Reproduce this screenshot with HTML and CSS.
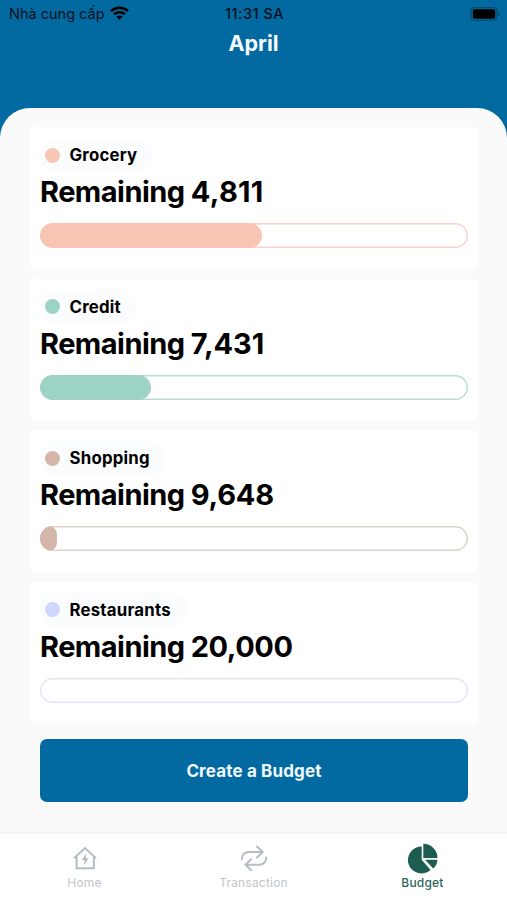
FILE: index.html
```html
<!DOCTYPE html>
<html lang="vi">
<head>
<meta charset="utf-8">
<title>Budget</title>
<link rel="stylesheet" href="styles.css">
</head>
<body>
<div class="app">
  <header class="header">
    <div class="status">
      <div class="carrier">
        <span class="carrier-name">Nhà cung cấp</span>
        <svg class="wifi" width="19" height="14" viewBox="0 0 19 14" fill="none" stroke="#000" stroke-width="2.500">
          <path d="M1 5.200C5.800.700 13.200.700 18 5.200"/>
          <path d="M4 8.400c3.100-2.800 7.900-2.800 11 0"/>
          <path d="M6.500 10.700c1.700-1.500 4.300-1.500 6 0L9.500 13.800z" fill="#000" stroke="none"/>
        </svg>
      </div>
      <span class="clock">11:31 SA</span>
      <svg class="battery" width="30" height="14" viewBox="0 0 30 14">
        <rect x="1.200" y=".7" width="25.600" height="12.600" rx="3.500" fill="none" stroke="#000" stroke-opacity=".3" stroke-width="1.200"/>
        <rect x="2.800" y="2.300" width="22.400" height="9.400" rx="2" fill="#000"/>
        <path d="M28 5v4c1.800-.6 1.800-3.400 0-4z" fill="#000" fill-opacity=".4"/>
      </svg>
    </div>
    <h1 class="month">April</h1>
  </header>

  <main class="sheet">
    <section class="card grocery">
      <div class="tag"><i class="dot"></i><span>Grocery</span></div>
      <h2 class="remaining">Remaining <span class="amount">4,811</span></h2>
      <div class="bar"><div class="fill" style="width:222px"></div></div>
    </section>
    <section class="card credit">
      <div class="tag"><i class="dot"></i><span>Credit</span></div>
      <h2 class="remaining">Remaining <span class="amount">7,431</span></h2>
      <div class="bar"><div class="fill" style="width:111px"></div></div>
    </section>
    <section class="card shopping">
      <div class="tag"><i class="dot"></i><span>Shopping</span></div>
      <h2 class="remaining">Remaining <span class="amount">9,648</span></h2>
      <div class="bar"><div class="fill" style="width:16.5px"></div></div>
    </section>
    <section class="card restaurants">
      <div class="tag"><i class="dot"></i><span>Restaurants</span></div>
      <h2 class="remaining">Remaining <span class="amount">20,000</span></h2>
      <div class="bar"><div class="fill" style="width:0"></div></div>
    </section>
    <button class="create" type="button">Create a Budget</button>
  </main>

  <nav class="tabs">
    <a class="tab">
      <svg width="30" height="30" viewBox="0 0 30 30" fill="none" stroke="#b3bdc7" stroke-width="2">
        <path d="M4 14.300 15 4l11 10.300M6.600 12.500v11.800h17.200V12.500"/>
        <path d="M16.300 9.300 11.700 16h2.700l-.4 5.500 4.600-7.300h-2.800z" fill="#b3bdc7" stroke="none"/>
      </svg>
      <span>Home</span>
    </a>
    <a class="tab">
      <svg width="30" height="30" viewBox="0 0 30 30" fill="none" stroke="#b3bdc7" stroke-width="2" stroke-linecap="round" stroke-linejoin="round">
        <path d="M2.800 15.500C3 11 6 8 10 8h13.500M18 2.500 23.700 8 18 13.500"/>
        <path d="M27.200 13.500c0 4.200-3 7.200-7 7.200H7M12.200 15.300l-5.700 5.400 5.700 5.500"/>
      </svg>
      <span>Transaction</span>
    </a>
    <a class="tab active">
      <svg width="30" height="30" viewBox="0 0 30 30" fill="#1d5c50">
        <path d="M13.700 2.500V15.800L22.500 26A13.500 13.500 0 1 1 13.700 2.500z"/>
        <path d="M15.300-.2A14.200 14.200 0 0 1 29.500 14H15.300z"/>
        <path d="M17 15.800H29.500a13 13 0 0 1-4.300 8.800z"/>
      </svg>
      <span>Budget</span>
    </a>
  </nav>
</div>
</body>
</html>
```

FILE: styles.css
```css
* { box-sizing: border-box; }
body {
  margin: 0;
  background: #0369a1;
  font-family: Inter, "Liberation Sans", sans-serif;
  color: #000;
}
.app {
  width: 507px;
  height: 900px;
  display: flex;
  flex-direction: column;
  overflow: hidden;
}
.header { height: 108px; flex: none; }
.status {
  height: 27px;
  padding: 0 7px 0 9px;
  display: grid;
  grid-template-columns: 1fr auto 1fr;
  align-items: center;
  color: #04121c;
}
.carrier { display: flex; align-items: center; gap: 5px; font-size: 14.5px; }
.carrier-name { white-space: nowrap; }
.wifi { margin-top: -2px; }
.clock { font-size: 14.5px; font-weight: 500; letter-spacing: .5px; }
.battery { justify-self: end; }
.month {
  margin: 2px 0 0;
  text-align: center;
  font-size: 21.5px;
  line-height: 28px;
  font-weight: 700;
  color: #f5faff;
}
.sheet {
  flex: 1;
  background: #fafafa;
  border-radius: 30px 30px 0 0;
  padding: 19px 29px 0 30px;
  display: flex;
  flex-direction: column;
  gap: 10px;
}
.card {
  flex: none;
  height: 141.5px;
  padding: 11px 10px 0;
  background: #fff;
  border-radius: 6px;
}
.grocery { --tone: #f8c4b4; --line: #f9d2c7; --track: .3px; }
.credit { --tone: #9dd3c5; --line: #b3dfd4; --track: -.1px; }
.shopping { --tone: #d3b6a9; --line: #e2d0c6; --track: -.2px; }
.restaurants { --tone: #d1d6ff; --line: #e5e3fc; --track: -.45px; }
.tag {
  display: inline-flex;
  align-items: center;
  gap: 9.5px;
  height: 34px;
  padding: 0 16px 0 5px;
  border-radius: 17px;
  background: #fafcfd;
  font-size: 16.8px;
  font-weight: 700;
  letter-spacing: .22px;
  vertical-align: top;
}
.dot { width: 15px; height: 15px; border-radius: 50%; background: var(--tone); }
.remaining {
  margin: 2px 0 0;
  font-size: 29px;
  line-height: 36px;
  font-weight: 700;
  letter-spacing: -.55px;
  white-space: nowrap;
}
.amount { letter-spacing: var(--track); }
.bar {
  margin-top: 13px;
  height: 25px;
  border-radius: 12.5px;
  overflow: hidden;
  box-shadow: inset 0 0 0 1.5px var(--line);
}
.fill { height: 100%; border-radius: 12.5px; background: var(--tone); }
.create {
  flex: none;
  width: 428px;
  height: 63px;
  margin: 6px 0 0 10px;
  border: 0;
  border-radius: 7px;
  background: #0369a1;
  color: #f0f9ff;
  font: 700 17px Inter, "Liberation Sans", sans-serif;
  letter-spacing: .15px;
}
.tabs {
  flex: none;
  height: 68px;
  border-top: 2px solid #f4f4f5;
  background: #fff;
  display: grid;
  grid-template-columns: repeat(3, 1fr);
}
.tab {
  display: flex;
  flex-direction: column;
  align-items: center;
  padding-top: 10px;
  gap: 1px;
  font-size: 12px;
  line-height: 16px;
  letter-spacing: .2px;
  color: #c3c6ca;
}
.tab svg { overflow: visible; }
.active { color: #2b655a; font-weight: 500; }
```
